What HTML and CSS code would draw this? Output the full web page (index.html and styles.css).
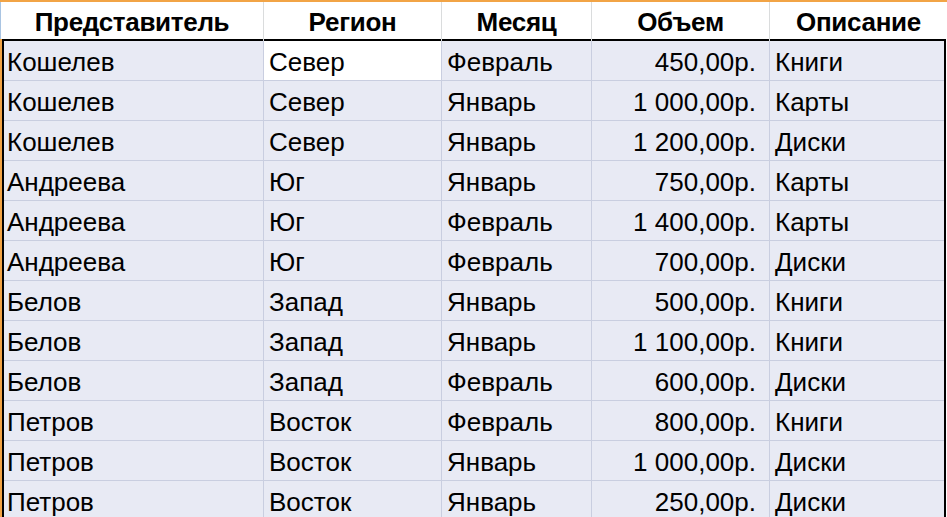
FILE: index.html
```html
<!DOCTYPE html>
<html lang="ru">
<head>
<meta charset="utf-8">
<link rel="stylesheet" href="styles.css">
</head>
<body>
<div class="sheet">
  <div class="hdr">
    <div class="hc">Представитель</div>
    <div class="hc">Регион</div>
    <div class="hc">Месяц</div>
    <div class="hc">Объем</div>
    <div class="hc last">Описание</div>
  </div>
  <div class="rowhead">
    <div class="sel">
      <div class="r"><div class="c">Кошелев</div><div class="c active">Север</div><div class="c">Февраль</div><div class="c num">450,00р.</div><div class="c last">Книги</div></div>
      <div class="r"><div class="c">Кошелев</div><div class="c">Север</div><div class="c">Январь</div><div class="c num">1 000,00р.</div><div class="c last">Карты</div></div>
      <div class="r"><div class="c">Кошелев</div><div class="c">Север</div><div class="c">Январь</div><div class="c num">1 200,00р.</div><div class="c last">Диски</div></div>
      <div class="r"><div class="c">Андреева</div><div class="c">Юг</div><div class="c">Январь</div><div class="c num">750,00р.</div><div class="c last">Карты</div></div>
      <div class="r"><div class="c">Андреева</div><div class="c">Юг</div><div class="c">Февраль</div><div class="c num">1 400,00р.</div><div class="c last">Карты</div></div>
      <div class="r"><div class="c">Андреева</div><div class="c">Юг</div><div class="c">Февраль</div><div class="c num">700,00р.</div><div class="c last">Диски</div></div>
      <div class="r"><div class="c">Белов</div><div class="c">Запад</div><div class="c">Январь</div><div class="c num">500,00р.</div><div class="c last">Книги</div></div>
      <div class="r"><div class="c">Белов</div><div class="c">Запад</div><div class="c">Январь</div><div class="c num">1 100,00р.</div><div class="c last">Книги</div></div>
      <div class="r"><div class="c">Белов</div><div class="c">Запад</div><div class="c">Февраль</div><div class="c num">600,00р.</div><div class="c last">Диски</div></div>
      <div class="r"><div class="c">Петров</div><div class="c">Восток</div><div class="c">Февраль</div><div class="c num">800,00р.</div><div class="c last">Книги</div></div>
      <div class="r"><div class="c">Петров</div><div class="c">Восток</div><div class="c">Январь</div><div class="c num">1 000,00р.</div><div class="c last">Диски</div></div>
      <div class="r"><div class="c">Петров</div><div class="c">Восток</div><div class="c">Январь</div><div class="c num">250,00р.</div><div class="c last">Диски</div></div>
    </div>
  </div>
</div>
</body>
</html>
```
FILE: styles.css
```css
* { box-sizing: border-box; }
html, body {
  margin: 0;
  padding: 0;
  background: #ffffff;
  width: 947px;
  height: 517px;
  overflow: hidden;
}
body {
  font-family: "Liberation Sans", Arial, sans-serif;
  font-size: 26px;
  color: #000;
}
.sheet {
  border-top: 2px solid #f2a446;
  width: 947px;
}
.hdr {
  display: grid;
  grid-template-columns: 263px 178px 150px 178px 1fr;
  height: 37px;
  border-left: 1px solid #a9c4e2;
}
.hc {
  font-weight: bold;
  text-align: center;
  border-right: 1px solid #dadcdd;
  line-height: 37px;
  padding-top: 2px;
  letter-spacing: -0.3px;
}
.hc.last { border-right: none; }
.rowhead {
  border-left: 2px solid #f2a446;
  width: 946px;
}
.sel {
  border: 2px solid #000;
  border-bottom: none;
  width: 944px;
  background: #e8eaf4;
}
.r {
  display: grid;
  grid-template-columns: 260px 178px 150px 178px 1fr;
  height: 40px;
  border-bottom: 1px solid #c9cee0;
}
.c {
  border-right: 1px solid #c9cee0;
  padding-left: 3px;
  line-height: 39px;
  padding-top: 2px;
  white-space: nowrap;
  overflow: hidden;
}
.r .c:nth-child(n+2) { padding-left: 5px; }
.c.last { border-right: none; }
.c.num { text-align: right; padding-right: 13px; }
.c.active { background: #ffffff; }
```
